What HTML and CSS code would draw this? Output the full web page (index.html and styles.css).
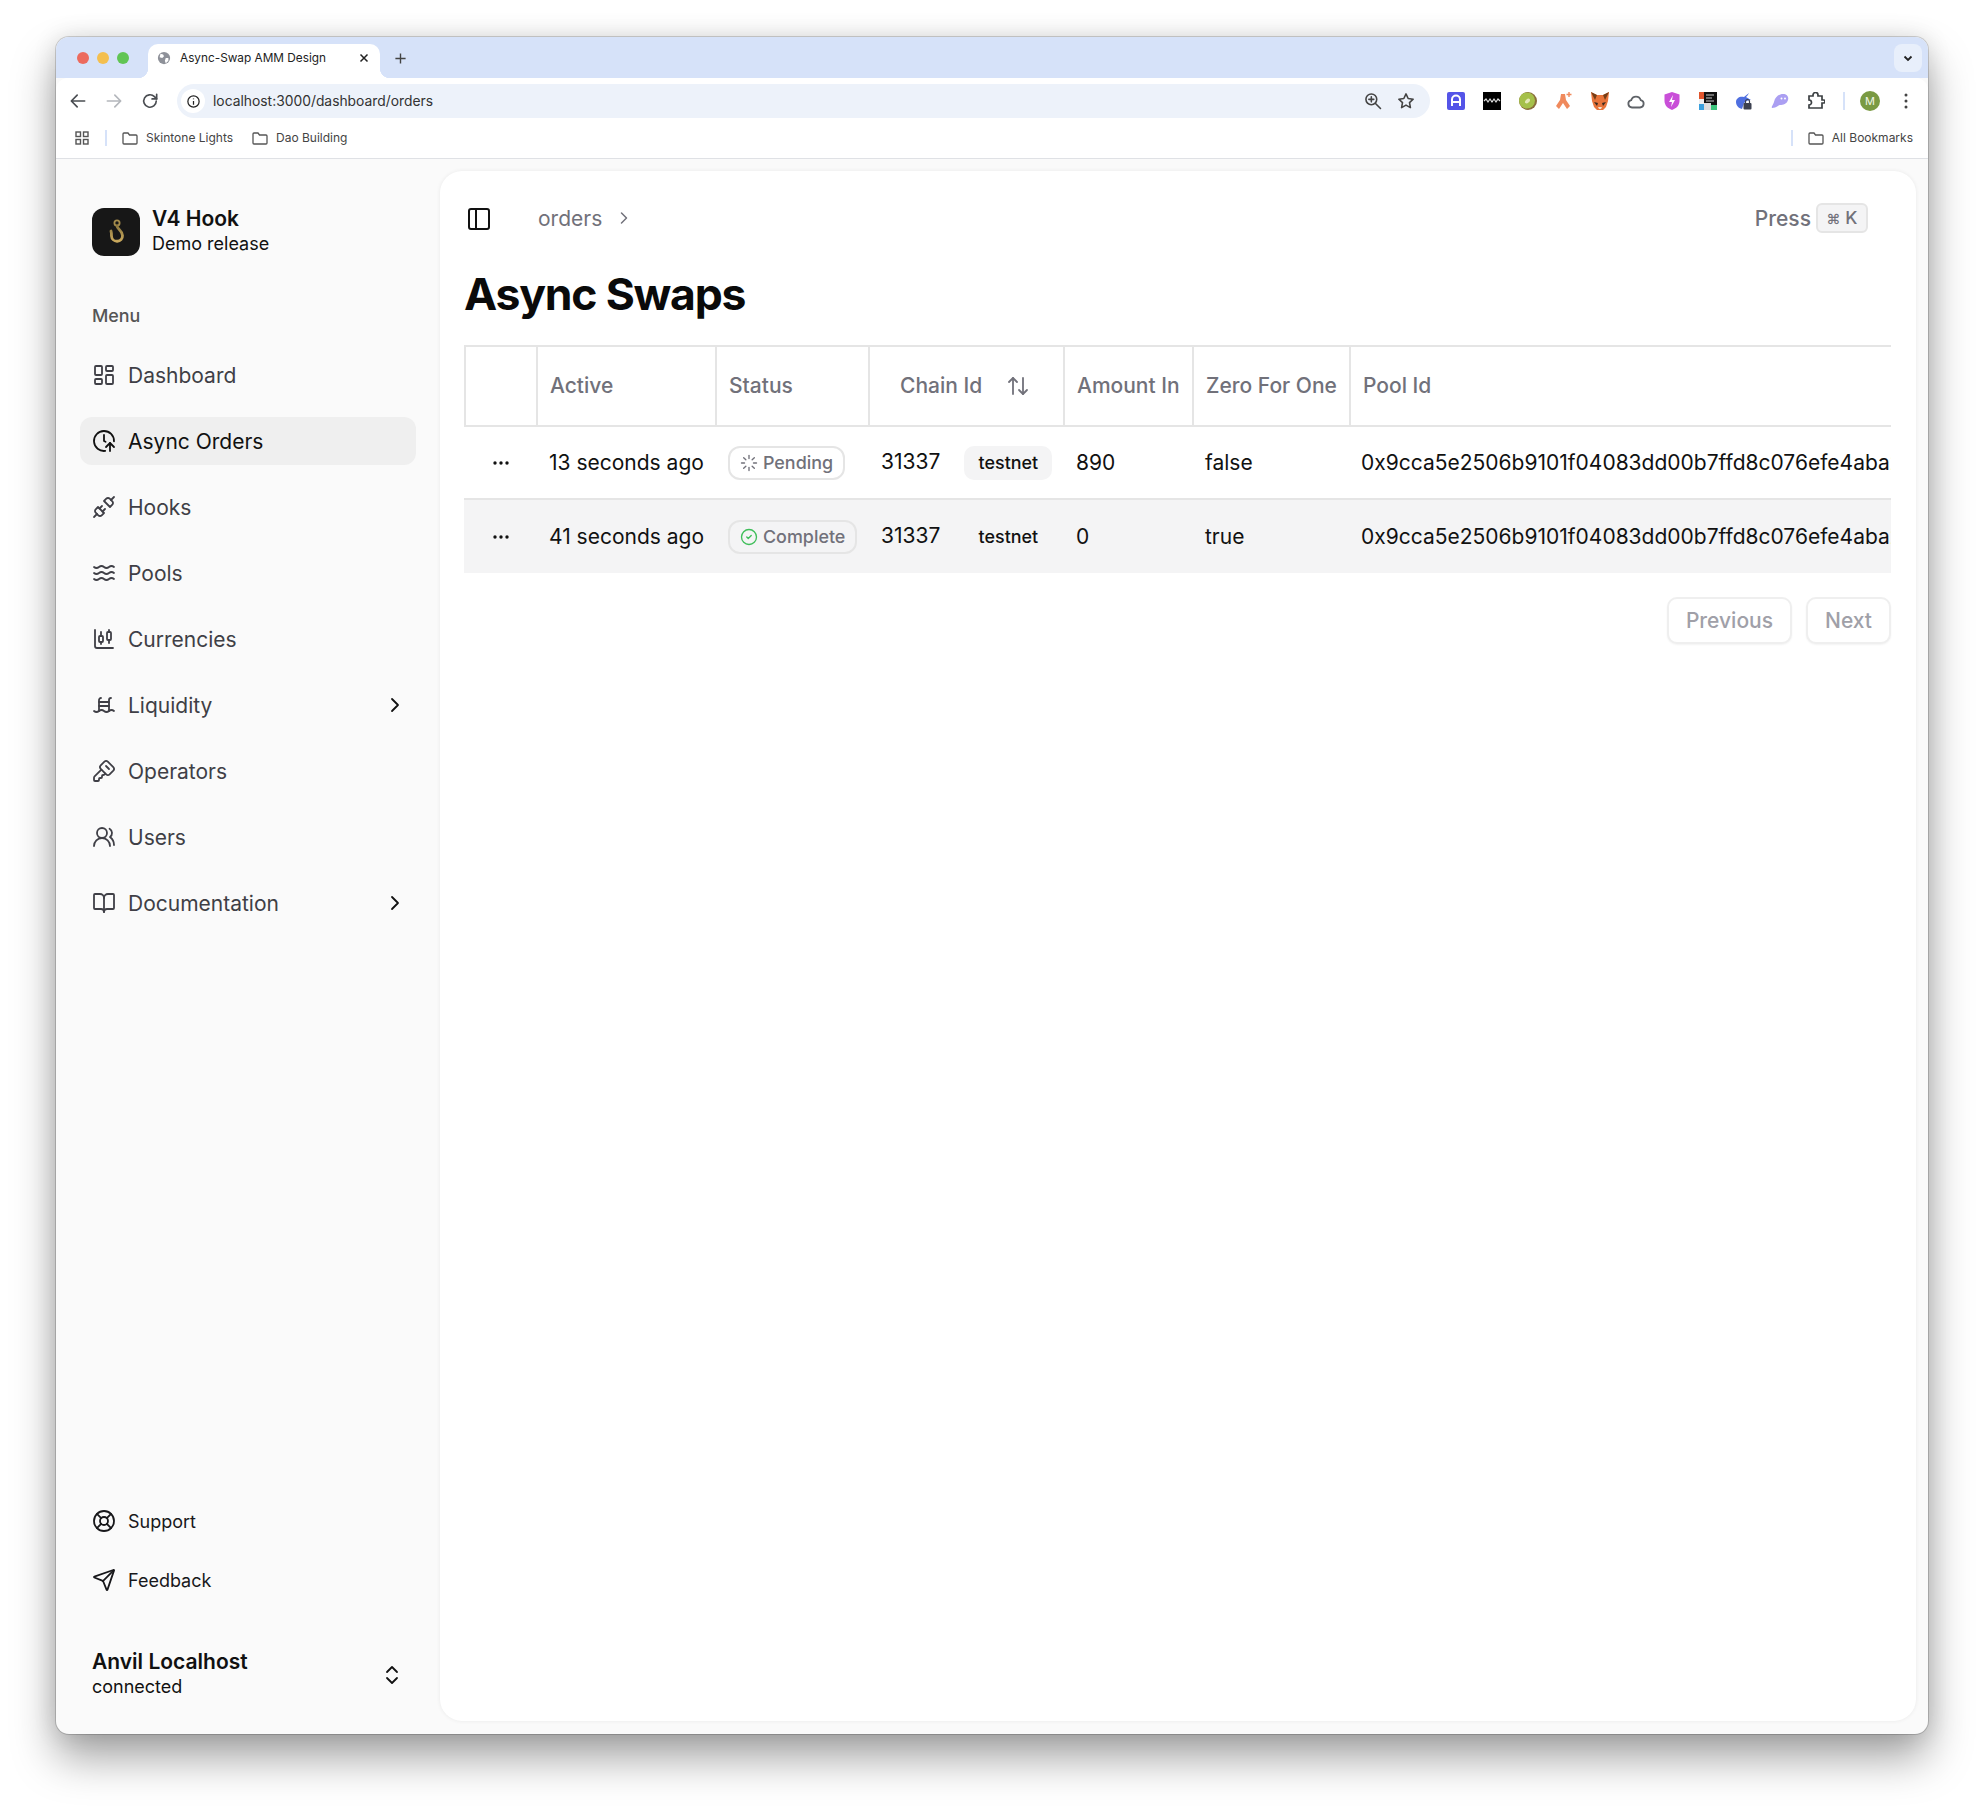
FILE: index.html
```html
<!DOCTYPE html>
<html lang="en">
<head>
    <meta charset="UTF-8">
    <title>Async-Swap AMM Design</title>
    <link rel="stylesheet" href="styles.css">
</head>
<body>
<div class="window">

    <div class="tabstrip">
        <div class="lights">
            <span class="light red"></span>
            <span class="light yellow"></span>
            <span class="light green"></span>
        </div>
        <div class="tab">
            <svg class="favicon" viewBox="0 0 16 16"><circle cx="8" cy="8" r="7" fill="#8e9199"/><path d="M4 3l3 1 1 2-2 2-3-1zM10 8l3 0 0 3-3 3-1-3z" fill="#fff"/></svg>
            <span class="tab-title">Async-Swap AMM Design</span>
            <svg class="tab-close" viewBox="0 0 12 12"><path d="M2.5 2.5l7 7M9.500 2.500l-7 7"/></svg>
        </div>
        <div class="new-tab"><svg viewBox="0 0 14 14"><path d="M7 1.500v11M1.500 7h11"/></svg></div>
        <div class="tab-menu"><svg viewBox="0 0 12 12"><path d="M2.500 4.500L6 8l3.500-3.500"/></svg></div>
    </div>

    <div class="toolbar">
        <div class="tool"><svg class="ico" viewBox="0 0 24 24"><path d="M20 12H5M11 5l-7 7 7 7"/></svg></div>
        <div class="tool faded"><svg class="ico" viewBox="0 0 24 24"><path d="M4 12h15M13 5l7 7-7 7"/></svg></div>
        <div class="tool"><svg class="ico" viewBox="0 0 24 24"><path d="M19.500 12a7.500 7.500 0 1 1-2.200-5.300L20 9.500"/><path d="M20 4v5.500h-5.500"/></svg></div>
        <div class="address">
            <div class="site-info"><svg viewBox="0 0 24 24"><circle cx="12" cy="12" r="9"/><path d="M12 11v6M12 7v1.500"/></svg></div>
            <span class="url">localhost:3000/dashboard/orders</span>
            <div class="address-end">
                <svg class="ico" viewBox="0 0 24 24"><circle cx="10" cy="10" r="6.500"/><path d="M15 15l6 6M10 7v6M7 10h6"/></svg>
                <svg class="ico" viewBox="0 0 24 24"><path d="M12 3.500l2.600 5.500 6 .8-4.400 4.100 1.100 6L12 17l-5.300 2.900 1.100-6-4.400-4.100 6-.8z"/></svg>
            </div>
        </div>
        <div class="extensions">
            <div class="ext"><svg viewBox="0 0 18 18"><rect width="18" height="18" rx="2" fill="#5454e8"/><path d="M5 14V7.500a4 4 0 0 1 8 0V14M5 10h8" fill="none" stroke="#fff" stroke-width="2"/></svg></div>
            <div class="ext"><svg viewBox="0 0 18 18"><rect width="18" height="18" fill="#000"/><path d="M1 9l2-2 2 3 2-3 2 3 2-3 2 3 2-3 2 2" fill="none" stroke="#ddd" stroke-width="1.200"/></svg></div>
            <div class="ext"><svg viewBox="0 0 18 18"><circle cx="9" cy="9" r="9" fill="#8a6d3b"/><circle cx="8" cy="8.500" r="8" fill="#a5c04a"/><ellipse cx="8.500" cy="9" rx="3" ry="1.800" fill="#e4e8b8" transform="rotate(-45 8.500 9)"/></svg></div>
            <div class="ext"><svg viewBox="0 0 18 18"><path d="M6 2h4l1 6 4 6-3 3-4-6-4 6-3-3 4-6z" fill="#f08a5d"/><path d="M14 0v5M11.500 2.500h5" stroke="#f08a5d" stroke-width="1.400"/></svg></div>
            <div class="ext"><svg viewBox="0 0 18 18"><path d="M0 0l6 3h6l6-3-1 9-2 6-3 3H6l-3-3-2-6z" fill="#e8743b"/><path d="M0 0l6 3-2 5zM18 0l-6 3 2 5z" fill="#763d16"/><path d="M3 10l4 1-1 3zM15 10l-4 1 1 3z" fill="#3a2a20"/><path d="M7 15h4l-1 2H8z" fill="#f3e3d3"/></svg></div>
            <div class="ext"><svg viewBox="0 0 18 18"><path d="M5 15.500a3.700 3.700 0 0 1-.8-7.300 5 5 0 0 1 9.600 0A3.700 3.700 0 0 1 13 15.500z" fill="none" stroke="#5f6368" stroke-width="1.800"/></svg></div>
            <div class="ext"><svg viewBox="0 0 18 18"><path d="M9 0l7.500 2.500V9c0 4.500-3.500 7.500-7.500 9-4-1.500-7.500-4.500-7.500-9V2.500z" fill="#c94fd8"/><path d="M10 3L6 10h3l-1 5 4-7H9z" fill="#fff"/></svg></div>
            <div class="ext"><svg viewBox="0 0 18 18"><rect width="18" height="18" fill="#111"/><rect width="5" height="7" fill="#e0552d"/><rect y="7" width="5" height="5" fill="#eee"/><rect y="12" width="5" height="6" fill="#3aa0dd"/><rect x="5" y="11" width="7" height="7" fill="#ddd"/><rect x="12" y="13" width="6" height="5" fill="#3cc47c"/><path d="M7 3h8M7 6h6M7 9h8" stroke="#ccc"/></svg></div>
            <div class="ext"><svg viewBox="0 0 18 18"><path d="M1 10c0-4 4-6 8-5l5-4c-1 2-2 3-3 4l5 3c-3 0-5 1-7 3l-2 6C3 16 1 13 1 10z" fill="#4f6fe0"/><rect x="8.500" y="11" width="8" height="6.500" rx="1" fill="#3c4150"/><path d="M10.500 11V9.500a2 2 0 0 1 4 0V11" fill="none" stroke="#3c4150" stroke-width="1.200"/></svg></div>
            <div class="ext"><svg viewBox="0 0 18 18"><path d="M1 16c-1-1 1-3 2-6 1-5 5-8 9-8s6 3 5 6c-1 4-5 5-8 5-2 0-3 3-8 3z" fill="#ab9ff2"/><circle cx="10.500" cy="6.500" r="1" fill="#fff"/><circle cx="14" cy="6.500" r="1" fill="#fff"/></svg></div>
            <div class="ext"><svg viewBox="0 0 18 18"><path d="M2 4h4V3a2 2 0 0 1 5 0v1h4v4h1.500a1.500 1.500 0 0 1 0 3H15v5H2v-3a2 2 0 0 0 0-5z" fill="none" stroke="#3c4043" stroke-width="1.700"/></svg></div>
        </div>
        <span class="tool-divider"></span>
        <div class="avatar">M</div>
        <div class="tool"><svg class="kebab" viewBox="0 0 4 16"><circle cx="2" cy="2" r="1.500"/><circle cx="2" cy="8" r="1.500"/><circle cx="2" cy="14" r="1.500"/></svg></div>
    </div>

    <div class="bookmarks">
        <svg class="apps" viewBox="0 0 14 14"><rect x="1" y="1" width="4.500" height="4.500"/><rect x="8.500" y="1" width="4.500" height="4.500"/><rect x="1" y="8.500" width="4.500" height="4.500"/><rect x="8.500" y="8.500" width="4.500" height="4.500"/></svg>
        <span class="mark-divider"></span>
        <div class="mark">
            <svg class="folder" viewBox="0 0 16 14"><path d="M1 3a1 1 0 0 1 1-1h4l1.500 2H14a1 1 0 0 1 1 1v7a1 1 0 0 1-1 1H2a1 1 0 0 1-1-1z"/></svg>
            <span>Skintone Lights</span>
        </div>
        <div class="mark">
            <svg class="folder" viewBox="0 0 16 14"><path d="M1 3a1 1 0 0 1 1-1h4l1.500 2H14a1 1 0 0 1 1 1v7a1 1 0 0 1-1 1H2a1 1 0 0 1-1-1z"/></svg>
            <span>Dao Building</span>
        </div>
        <span class="mark-divider push"></span>
        <div class="mark all">
            <svg class="folder" viewBox="0 0 16 14"><path d="M1 3a1 1 0 0 1 1-1h4l1.500 2H14a1 1 0 0 1 1 1v7a1 1 0 0 1-1 1H2a1 1 0 0 1-1-1z"/></svg>
            <span>All Bookmarks</span>
        </div>
    </div>

    <div class="app">
        <aside class="sidebar">
            <div class="brand">
                <div class="brand-logo">
                    <svg viewBox="0 0 48 48">
                        <defs><linearGradient id="gold" x1="0" y1="0" x2="0" y2="1"><stop offset="0" stop-color="#8f7a40"/><stop offset="1" stop-color="#c9a85c"/></linearGradient></defs>
                        <circle cx="25" cy="15" r="2.600" fill="none" stroke="#a58c4c" stroke-width="1.800"/>
                        <path d="M25 18c.5 3.500 5.500 4.500 5.500 9.500a5.500 5.500 0 0 1-11 .5c0-1.500 0-3.500-.5-5" fill="none" stroke="url(#gold)" stroke-width="2.800" stroke-linecap="round"/>
                    </svg>
                </div>
                <div>
                    <div class="brand-name">V4 Hook</div>
                    <div class="brand-sub">Demo release</div>
                </div>
            </div>

            <div class="menu-label">Menu</div>

            <nav class="nav">
                <a class="nav-item"><svg class="ico" viewBox="0 0 24 24"><rect width="7" height="9" x="3" y="3" rx="1"/><rect width="7" height="5" x="14" y="3" rx="1"/><rect width="7" height="9" x="14" y="12" rx="1"/><rect width="7" height="5" x="3" y="16" rx="1"/></svg>Dashboard</a>
                <a class="nav-item active"><svg class="ico" viewBox="0 0 24 24"><path d="M13.228 21.925A10 10 0 1 1 21.994 12.338"/><path d="M12 6v6l1.562.781"/><path d="m14 18 4-4 4 4"/><path d="M18 22v-8"/></svg>Async Orders</a>
                <a class="nav-item"><svg class="ico" viewBox="0 0 24 24"><path d="m19 5 3-3"/><path d="m2 22 3-3"/><path d="M6.300 20.300a2.400 2.400 0 0 0 3.400 0L12 18l-6-6-2.300 2.300a2.400 2.400 0 0 0 0 3.400Z"/><path d="M7.500 13.500 10 11"/><path d="M10.500 16.500 13 14"/><path d="m12 6 6 6 2.300-2.300a2.400 2.400 0 0 0 0-3.400l-2.600-2.600a2.400 2.400 0 0 0-3.400 0Z"/></svg>Hooks</a>
                <a class="nav-item"><svg class="ico" viewBox="0 0 24 24"><path d="M2 6c.6.500 1.200 1 2.500 1C7 7 7 5 9.500 5c2.600 0 2.400 2 5 2 2.500 0 2.500-2 5-2 1.300 0 1.900.500 2.500 1"/><path d="M2 12c.6.500 1.200 1 2.500 1 2.500 0 2.500-2 5-2 2.600 0 2.400 2 5 2 2.500 0 2.500-2 5-2 1.300 0 1.900.500 2.500 1"/><path d="M2 18c.6.500 1.200 1 2.500 1 2.500 0 2.500-2 5-2 2.600 0 2.400 2 5 2 2.500 0 2.500-2 5-2 1.300 0 1.900.500 2.500 1"/></svg>Pools</a>
                <a class="nav-item"><svg class="ico" viewBox="0 0 24 24"><path d="M9 5v4"/><rect width="4" height="6" x="7" y="9" rx="1"/><path d="M9 15v2"/><path d="M17 3v2"/><rect width="4" height="8" x="15" y="5" rx="1"/><path d="M17 13v3"/><path d="M3 3v16a2 2 0 0 0 2 2h16"/></svg>Currencies</a>
                <a class="nav-item"><svg class="ico" viewBox="0 0 24 24"><path d="M19 5a2 2 0 0 0-2 2v11"/><path d="M2 18c.6.500 1.200 1 2.500 1 2.500 0 2.500-2 5-2 2.600 0 2.400 2 5 2 2.500 0 2.500-2 5-2 1.300 0 1.900.500 2.500 1"/><path d="M7 13h10"/><path d="M7 9h10"/><path d="M9 5a2 2 0 0 0-2 2v11"/></svg>Liquidity<svg class="ico nav-arrow" viewBox="0 0 24 24"><path d="m9 18 6-6-6-6"/></svg></a>
                <a class="nav-item"><svg class="ico" viewBox="0 0 24 24"><path d="M12.400 2.700a2.500 2.500 0 0 1 3.400 0l5.500 5.500a2.500 2.500 0 0 1 0 3.400l-3.700 3.700a2.500 2.500 0 0 1-3.400 0L8.700 9.800a2.500 2.500 0 0 1 0-3.400z"/><path d="m14 7 3 3"/><path d="m9.400 10.600-6.814 6.814A2 2 0 0 0 2 18.828V21a1 1 0 0 0 1 1h3a1 1 0 0 0 1-1v-1a1 1 0 0 1 1-1h1a1 1 0 0 0 1-1v-1a1 1 0 0 1 1-1h.172a2 2 0 0 0 1.414-.586l.814-.814"/></svg>Operators</a>
                <a class="nav-item"><svg class="ico" viewBox="0 0 24 24"><path d="M18 21a8 8 0 0 0-16 0"/><circle cx="10" cy="8" r="5"/><path d="M22 20c0-3.370-2-6.500-4-8a5 5 0 0 0-.45-8.300"/></svg>Users</a>
                <a class="nav-item"><svg class="ico" viewBox="0 0 24 24"><path d="M12 7v14"/><path d="M3 18a1 1 0 0 1-1-1V4a1 1 0 0 1 1-1h5a4 4 0 0 1 4 4 4 4 0 0 1 4-4h5a1 1 0 0 1 1 1v13a1 1 0 0 1-1 1h-6a3 3 0 0 0-3 3 3 3 0 0 0-3-3z"/></svg>Documentation<svg class="ico nav-arrow" viewBox="0 0 24 24"><path d="m9 18 6-6-6-6"/></svg></a>
            </nav>

            <div class="secondary">
                <a class="secondary-item"><svg class="ico" viewBox="0 0 24 24"><circle cx="12" cy="12" r="10"/><path d="m4.930 4.930 4.240 4.240"/><path d="m14.830 9.170 4.240-4.240"/><path d="m14.830 14.830 4.240 4.240"/><path d="m9.170 14.830-4.240 4.240"/><circle cx="12" cy="12" r="4"/></svg>Support</a>
                <a class="secondary-item"><svg class="ico" viewBox="0 0 24 24"><path d="M14.536 21.686a.5.5 0 0 0 .937-.024l6.500-19a.496.496 0 0 0-.635-.635l-19 6.500a.5.5 0 0 0-.024.937l7.930 3.180a2 2 0 0 1 1.112 1.110z"/><path d="m21.854 2.147-10.940 10.939"/></svg>Feedback</a>
            </div>

            <div class="network">
                <div>
                    <div class="network-name">Anvil Localhost</div>
                    <div class="network-status">connected</div>
                </div>
                <svg class="ico" viewBox="0 0 24 24"><path d="m7 15 5 5 5-5"/><path d="m7 9 5-5 5 5"/></svg>
            </div>
        </aside>

        <main class="panel">
            <header class="panel-head">
                <svg class="ico panel-toggle" viewBox="0 0 24 24"><rect width="20" height="20" x="2" y="2" rx="2"/><path d="M9 2v20"/></svg>
                <span class="crumb">orders</span>
                <svg class="ico crumb-sep" viewBox="0 0 24 24"><path d="m9 18 6-6-6-6"/></svg>
                <div class="press">Press <kbd class="kbd"><small>⌘</small> K</kbd></div>
            </header>

            <h1 class="page-title">Async Swaps</h1>

            <div class="table-wrap">
                <table class="orders">
                    <colgroup>
                        <col class="c-menu"><col class="c-active"><col class="c-status"><col class="c-chain"><col class="c-amount"><col class="c-zero"><col class="c-pool">
                    </colgroup>
                    <thead>
                        <tr>
                            <th></th>
                            <th>Active</th>
                            <th>Status</th>
                            <th><div class="chain-head">Chain Id<svg class="ico" viewBox="0 0 24 24"><path d="m21 16-4 4-4-4"/><path d="M17 20V4"/><path d="m3 8 4-4 4 4"/><path d="M7 4v16"/></svg></div></th>
                            <th>Amount In</th>
                            <th>Zero For One</th>
                            <th>Pool Id</th>
                        </tr>
                    </thead>
                    <tbody>
                        <tr>
                            <td class="dots"><svg viewBox="0 0 18 6"><circle cx="3" cy="3" r="1.700"/><circle cx="9" cy="3" r="1.700"/><circle cx="15" cy="3" r="1.700"/></svg></td>
                            <td>13 seconds ago</td>
                            <td><span class="badge"><svg class="ico" viewBox="0 0 24 24"><path d="M12 2v4"/><path d="m16.200 7.800 2.900-2.900"/><path d="M18 12h4"/><path d="m16.200 16.200 2.900 2.900"/><path d="M12 18v4"/><path d="m4.900 19.100 2.900-2.900"/><path d="M2 12h4"/><path d="m4.900 4.900 2.900 2.900"/></svg>Pending</span></td>
                            <td><div class="chain"><span class="chain-id">31337</span><span class="net">testnet</span></div></td>
                            <td>890</td>
                            <td>false</td>
                            <td class="pool">0x9cca5e2506b9101f04083dd00b7ffd8c076efe4aba2d7c1e90</td>
                        </tr>
                        <tr class="selected">
                            <td class="dots"><svg viewBox="0 0 18 6"><circle cx="3" cy="3" r="1.700"/><circle cx="9" cy="3" r="1.700"/><circle cx="15" cy="3" r="1.700"/></svg></td>
                            <td>41 seconds ago</td>
                            <td><span class="badge"><svg class="ico ok" viewBox="0 0 24 24"><circle cx="12" cy="12" r="10"/><path d="m9 12 2 2 4-4"/></svg>Complete</span></td>
                            <td><div class="chain"><span class="chain-id">31337</span><span class="net plain">testnet</span></div></td>
                            <td>0</td>
                            <td>true</td>
                            <td class="pool">0x9cca5e2506b9101f04083dd00b7ffd8c076efe4aba2d7c1e90</td>
                        </tr>
                    </tbody>
                </table>
            </div>

            <div class="pager">
                <button class="pager-btn">Previous</button>
                <button class="pager-btn">Next</button>
            </div>
        </main>
    </div>
</div>
</body>
</html>
```

FILE: styles.css
```css
* {
    box-sizing: border-box;
}

body {
    margin: 0;
    padding: 37px 56px 74px;
    background-color: #fff;
    font-family: Inter, "Liberation Sans", sans-serif;
    color: #111;
}

.ico {
    width: 24px;
    height: 24px;
    flex: none;
    fill: none;
    stroke: currentColor;
    stroke-width: 1.8;
    stroke-linecap: round;
    stroke-linejoin: round;
}

.window {
    display: flex;
    flex-direction: column;
    height: 1697px;
    border-radius: 13px;
    overflow: hidden;
    background-color: #fafafa;
    box-shadow: 0 0 0 1px rgba(0, 0, 0, 0.16), 0 24px 44px rgba(0, 0, 0, 0.36), 0 0 24px rgba(0, 0, 0, 0.12);
}

/* browser chrome */
.tabstrip {
    display: flex;
    align-items: flex-start;
    height: 41px;
    padding: 7px 6px 0 21px;
    background-color: #d6e2f9;
}

.lights {
    display: flex;
    align-items: center;
    gap: 8px;
    height: 28px;
}

.light {
    width: 12px;
    height: 12px;
    border-radius: 50%;
}
.light.red { background-color: #ec6a5e; }
.light.yellow { background-color: #f4bf4f; }
.light.green { background-color: #61c554; }

.tab {
    position: relative;
    display: flex;
    align-items: center;
    width: 232px;
    height: 34px;
    margin-left: 19px;
    padding: 0 10px 6px 9px;
    border-radius: 10px 10px 0 0;
    background-color: #fff;
}

.tab::before, .tab::after {
    content: "";
    position: absolute;
    bottom: 0;
    width: 10px;
    height: 10px;
}
.tab::before {
    left: -10px;
    background: radial-gradient(circle at 0 0, #d6e2f9 10px, #fff 10.500px);
}
.tab::after {
    right: -10px;
    background: radial-gradient(circle at 100% 0, #d6e2f9 10px, #fff 10.500px);
}

.favicon {
    width: 14px;
    height: 14px;
    flex: none;
}

.tab-title {
    margin-left: 9px;
    font-size: 11.800px;
    white-space: nowrap;
    color: #222;
}

.tab-close {
    width: 12px;
    height: 12px;
    margin-left: auto;
    fill: none;
    stroke: #222;
    stroke-width: 1.500;
}

.new-tab {
    display: flex;
    align-items: center;
    justify-content: center;
    width: 28px;
    height: 28px;
    margin-left: 6px;
}
.new-tab svg {
    width: 13px;
    height: 13px;
    fill: none;
    stroke: #444;
    stroke-width: 1.500;
}

.tab-menu {
    display: flex;
    align-items: center;
    justify-content: center;
    width: 28px;
    height: 28px;
    margin-left: auto;
    border-radius: 8px;
    background-color: #e8effb;
}
.tab-menu svg {
    width: 12px;
    height: 12px;
    fill: none;
    stroke: #222;
    stroke-width: 1.800;
}

.toolbar {
    display: flex;
    align-items: center;
    height: 46px;
    padding-left: 4px;
    border-radius: 12px 12px 0 0;
    background-color: #fff;
}

.tool {
    display: flex;
    align-items: center;
    justify-content: center;
    width: 36px;
    color: #4a4d52;
}
.tool .ico {
    width: 20px;
    height: 20px;
    stroke-width: 2;
}
.tool.faded {
    color: #b4b7bc;
}

.address {
    display: flex;
    align-items: center;
    width: 1253px;
    height: 34px;
    margin-left: 9px;
    padding: 0 14px 0 4px;
    border-radius: 17px;
    background-color: #edf2fa;
}

.site-info {
    display: flex;
    align-items: center;
    justify-content: center;
    width: 24px;
    height: 24px;
    border-radius: 50%;
    background-color: #fff;
}
.site-info svg {
    width: 15px;
    height: 15px;
    fill: none;
    stroke: #222;
    stroke-width: 2;
}

.url {
    margin-left: 8px;
    font-size: 13.850px;
    color: #333;
}

.address-end {
    display: flex;
    gap: 13px;
    margin-left: auto;
    color: #444;
}
.address-end .ico {
    width: 20px;
    height: 20px;
    stroke-width: 1.900;
}

.extensions {
    display: flex;
    margin-left: 8px;
}

.ext {
    display: flex;
    align-items: center;
    justify-content: center;
    width: 36px;
}
.ext svg {
    width: 18px;
    height: 18px;
}

.tool-divider {
    width: 2px;
    height: 18px;
    margin-left: 9px;
    background-color: #d6e2f9;
}

.avatar {
    display: flex;
    align-items: center;
    justify-content: center;
    width: 20px;
    height: 20px;
    margin-left: 15px;
    border-radius: 50%;
    background-color: #7a9a43;
    color: #f0f5e6;
    font-size: 11px;
}

.avatar + .tool {
    margin-left: 8px;
}

.kebab {
    width: 4px;
    height: 16px;
    fill: #444;
}

.bookmarks {
    display: flex;
    align-items: center;
    height: 35px;
    padding: 0 15px 7px 19px;
    border-bottom: 1px solid #dfe1e5;
    background-color: #fff;
    font-size: 12px;
    color: #444;
}

.apps {
    width: 14px;
    height: 14px;
    fill: none;
    stroke: #555;
    stroke-width: 1.400;
}

.mark-divider {
    width: 2px;
    height: 16px;
    margin-left: 16px;
    background-color: #d6e2f9;
}
.mark-divider.push {
    margin-left: auto;
}

.mark {
    display: flex;
    align-items: center;
    gap: 8px;
    margin-left: 15px;
    white-space: nowrap;
}
.mark + .mark {
    margin-left: 19px;
}
.mark.all {
    margin-left: 15px;
}

.folder {
    width: 16px;
    height: 14px;
    fill: none;
    stroke: #555;
    stroke-width: 1.300;
}

/* app layout */
.app {
    display: flex;
    flex: 1;
    min-height: 0;
}

.sidebar {
    display: flex;
    flex-direction: column;
    width: 384px;
    flex: none;
    padding: 48px 24px 35px;
}

.brand {
    display: flex;
    align-items: center;
    gap: 12px;
    padding-left: 12px;
}

.brand-logo {
    width: 48px;
    height: 48px;
    flex: none;
    border-radius: 12px;
    background-color: #171717;
}
.brand-logo svg {
    display: block;
}

.brand-name {
    font-size: 21px;
    line-height: 24px;
    font-weight: 600;
}

.brand-sub {
    margin-top: 1px;
    font-size: 18px;
    line-height: 24px;
}

.menu-label {
    margin-top: 48px;
    padding-left: 12px;
    font-size: 17.900px;
    line-height: 24px;
    font-weight: 500;
    color: #555;
}

.nav {
    display: flex;
    flex-direction: column;
    gap: 18px;
    margin-top: 23px;
}

.nav-item {
    display: flex;
    align-items: center;
    gap: 12px;
    height: 48px;
    padding: 0 12px;
    border-radius: 12px;
    font-size: 21px;
    color: #3f3f46;
}

.nav-item.active {
    background-color: #efefef;
    color: #111;
}

.nav-arrow {
    margin: 0 -3px 0 auto;
    color: #111;
}

.secondary {
    display: flex;
    flex-direction: column;
    gap: 11px;
    margin-top: auto;
}

.secondary-item {
    display: flex;
    align-items: center;
    gap: 12px;
    height: 48px;
    padding: 0 12px;
    font-size: 18px;
    color: #18181b;
}

.network {
    display: flex;
    align-items: center;
    justify-content: space-between;
    margin-top: 46px;
    padding: 0 12px;
}

.network-name {
    font-size: 21px;
    line-height: 24px;
    font-weight: 600;
}

.network-status {
    margin-top: 1px;
    font-size: 18px;
    line-height: 24px;
}

/* main panel */
.panel {
    flex: 1;
    min-width: 0;
    margin: 12px 12px 13px 0;
    padding: 24px 25px 24px 24px;
    border-radius: 22px;
    background-color: #fff;
    box-shadow: 0 0 4px rgba(0, 0, 0, 0.07);
}

.panel-head {
    display: flex;
    align-items: center;
    height: 46px;
    padding: 0 23px 0 3px;
}

.panel-toggle {
    margin-top: 2px;
    stroke-width: 2;
}

.crumb {
    margin-left: 47px;
    font-size: 21px;
    color: #71717a;
}

.crumb-sep {
    width: 20px;
    height: 20px;
    margin-left: 12px;
    color: #71717a;
}

.press {
    display: flex;
    align-items: center;
    gap: 5px;
    margin-left: auto;
    font-size: 21px;
    font-weight: 500;
    color: #71717a;
}

.kbd {
    display: inline-block;
    width: 52px;
    height: 30px;
    border: 2px solid #e5e5e5;
    border-radius: 6px;
    background-color: #f4f4f5;
    font-family: inherit;
    font-size: 17.700px;
    line-height: 26px;
    text-align: center;
    color: #71717a;
}
.kbd small {
    font-size: 14px;
}

.page-title {
    margin: 26px 0 0;
    font-size: 44.500px;
    line-height: 54px;
    font-weight: 700;
    letter-spacing: -1.200px;
    color: #0a0a0a;
}

.table-wrap {
    margin-top: 24px;
    overflow: hidden;
}

.orders {
    width: 1427px;
    table-layout: fixed;
    border-collapse: separate;
    border-spacing: 0;
    font-size: 21px;
}

.c-menu { width: 74px; }
.c-active { width: 179px; }
.c-status { width: 153px; }
.c-chain { width: 195px; }
.c-amount { width: 129px; }
.c-zero { width: 157px; }
.c-pool { width: 540px; }

.orders th {
    height: 82px;
    padding: 0 0 1px 12px;
    border-top: 2px solid #e5e5e5;
    border-bottom: 2px solid #e5e5e5;
    border-right: 2px solid #e5e5e5;
    text-align: left;
    font-weight: 500;
    white-space: nowrap;
    color: #71717a;
}
.orders th:first-child {
    border-left: 2px solid #e5e5e5;
}
.orders th:last-child {
    border-right: none;
}

.chain-head {
    display: flex;
    align-items: center;
    gap: 24px;
    padding-left: 18px;
}

.orders td {
    height: 73px;
    padding: 0 0 0 11px;
    border-bottom: 2px solid #e5e5e5;
    white-space: nowrap;
    overflow: hidden;
}
.orders tr:last-child td {
    height: 73px;
    border-bottom: none;
}
.orders .pool {
    padding-left: 10px;
}
.selected td {
    background-color: #f4f4f5;
}

.orders .dots {
    padding-left: 0;
    text-align: center;
}
.dots svg {
    display: block;
    width: 18px;
    height: 6px;
    margin: 0 auto;
    fill: #111;
}

.badge {
    display: inline-flex;
    align-items: center;
    gap: 5px;
    height: 34px;
    padding: 0 10px;
    border: 2px solid #e5e5e5;
    border-radius: 12px;
    font-size: 17.900px;
    font-weight: 500;
    color: #71717a;
}
.badge .ico {
    width: 18px;
    height: 18px;
}
.badge .ok {
    color: #3fbe5a;
}

.chain {
    display: flex;
    align-items: center;
    gap: 24px;
}

.chain-id {
    padding-bottom: 2px;
}

.net {
    display: flex;
    align-items: center;
    justify-content: center;
    width: 88px;
    height: 34px;
    border-radius: 10px;
    background-color: #f4f4f5;
    font-size: 17.900px;
    font-weight: 500;
}
.net.plain {
    background: none;
}

.pager {
    display: flex;
    justify-content: flex-end;
    gap: 14px;
    margin-top: 24px;
}

.pager-btn {
    height: 47px;
    padding: 0 17px;
    border: 2px solid #efefef;
    border-radius: 10px;
    background-color: #fff;
    box-shadow: 0 1px 2px rgba(0, 0, 0, 0.05);
    font-family: inherit;
    font-size: 21px;
    font-weight: 500;
    color: #a0a0a8;
}
```
